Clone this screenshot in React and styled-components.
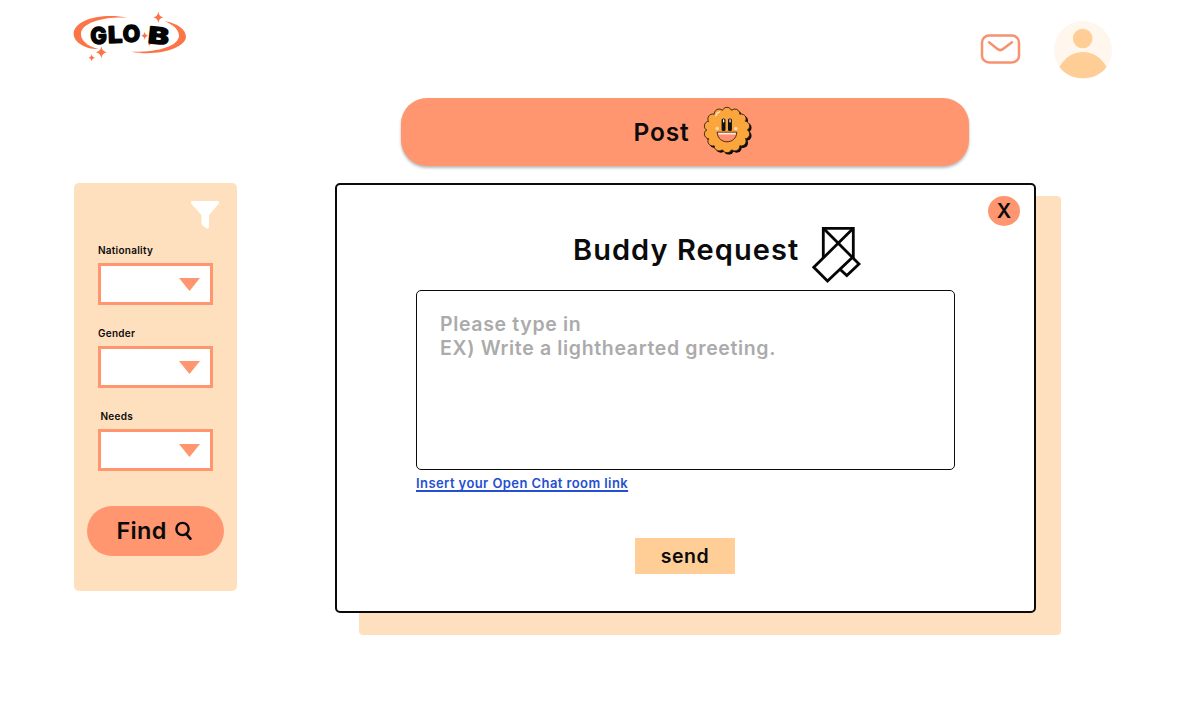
import React from 'react';
import styled, { createGlobalStyle } from 'styled-components';

//Styles

const GlobalStyle = createGlobalStyle`
  * {
    box-sizing: border-box;
  }

  body {
    margin: 0;
    background: #ffffff;
    font-family: Inter, 'Liberation Sans', sans-serif;
    color: #0b0b0b;
  }

  button {
    font-family: inherit;
    color: inherit;
    border: none;
    padding: 0;
    cursor: pointer;
  }
`;

const coral = '#ff966f';
const peach = '#ffe0be';
const apricot = '#ffce97';

//Components

const Page = styled('div')`
  width: 1200px;
  height: 701px;
  overflow: hidden;
`;

const Header = styled('header')`
  display: flex;
  align-items: flex-start;
  height: 98px;
  padding: 0 88px 0 60px;
`;

const Actions = styled('div')`
  display: flex;
  align-items: flex-start;
  gap: 33px;
  margin-left: auto;
  padding-top: 21px;

  svg:first-child {
    margin-top: 12px;
  }
`;

const Content = styled('div')`
  display: flex;
  align-items: flex-start;
  gap: 98px;
  padding-left: 74px;
`;

const Sidebar = styled('aside')`
  display: flex;
  flex-direction: column;
  width: 163px;
  height: 408px;
  margin-top: 85px;
  padding: 17px 13px 0;
  border-radius: 5px;
  background: ${peach};
`;

const FilterIcon = styled('svg')`
  align-self: flex-end;
  margin-right: 4px;
`;

const Field = styled('div')`
  height: 83px;
  padding: 0 11px;
`;

const Label = styled('div')`
  height: 19px;
  padding-left: ${({ $indent }) => $indent || 0}px;
  font-size: 10px;
  font-weight: 600;
  line-height: 12px;
  letter-spacing: 0.25px;
`;

const Select = styled('div')`
  display: flex;
  align-items: center;
  justify-content: flex-end;
  width: 115px;
  height: 42px;
  padding-right: 10px;
  border: 3px solid ${coral};
  background: #ffffff;
`;

const FindBtn = styled('button')`
  display: flex;
  align-items: center;
  justify-content: center;
  gap: 8px;
  height: 50px;
  margin-top: 13px;
  padding: 0 2px 2px 0;
  border-radius: 25px;
  background: ${coral};
  font-size: 23.5px;
  font-weight: 600;
  letter-spacing: 0.3px;
`;

const Main = styled('main')`
  display: flex;
  flex-direction: column;
  align-items: center;
  width: 701px;
`;

const PostBtn = styled('button')`
  display: flex;
  align-items: center;
  justify-content: center;
  gap: 14px;
  width: 568px;
  height: 68px;
  margin-right: 1px;
  padding: 0 0 1px 17px;
  border-radius: 26px;
  background: ${coral};
  box-shadow: 0 2px 3px rgba(0, 0, 0, 0.28);
  font-size: 24.5px;
  font-weight: 600;
  letter-spacing: 0.8px;

  svg {
    margin-bottom: 2px;
  }
`;

const Modal = styled('section')`
  position: relative;
  z-index: 0;
  display: flex;
  flex-direction: column;
  align-items: center;
  width: 701px;
  height: 430px;
  margin-top: 17px;

  &::before {
    content: '';
    position: absolute;
    z-index: -1;
    top: 13px;
    left: 24px;
    width: 702px;
    height: 439px;
    border-radius: 4px;
    background: ${peach};
  }
`;

const ModalBody = styled('div')`
  display: flex;
  flex-direction: column;
  width: 701px;
  height: 430px;
  padding: 11px 14px 0 79px;
  border: 2px solid #0b0b0b;
  border-radius: 5px;
  background: #ffffff;
`;

const CloseBtn = styled('button')`
  align-self: flex-end;
  width: 32px;
  height: 30px;
  border-radius: 50%;
  background: ${coral};
  font-size: 20px;
  font-weight: 600;
  line-height: 31px;
`;

const Heading = styled('div')`
  display: flex;
  align-items: center;
  gap: 13px;
  width: 540px;
  height: 58px;
  padding-left: 157px;
`;

const Title = styled('h1')`
  margin: 0 0 11px;
  font-size: 29px;
  font-weight: 600;
  letter-spacing: 1.05px;
  white-space: nowrap;
`;

const Message = styled('textarea')`
  display: block;
  width: 539px;
  height: 180px;
  margin-top: 6px;
  padding: 21px 23px;
  border: 1.5px solid #0b0b0b;
  border-radius: 5px;
  background: #ffffff;
  font-family: inherit;
  font-size: 19.5px;
  font-weight: 600;
  line-height: 24px;
  letter-spacing: 0.65px;
  resize: none;

  &::placeholder {
    color: #ababab;
    opacity: 1;
  }
`;

const ChatLink = styled('a')`
  align-self: flex-start;
  margin-top: 5px;
  color: #2450d0;
  font-size: 13px;
  font-weight: 600;
  line-height: 16px;
  letter-spacing: 0.42px;
  text-decoration: underline;
  text-decoration-thickness: 1.5px;
  text-decoration-skip-ink: none;
  text-underline-offset: 2px;
`;

const SendBtn = styled('button')`
  width: 100px;
  height: 36px;
  margin: 47px 0 0 219px;
  background: ${apricot};
  font-size: 19.5px;
  font-weight: 600;
  letter-spacing: 0.6px;
`;

const Star = ({ x, y, r }) => (
  <path
    fill="#fb7549"
    transform={`translate(${x} ${y}) scale(${r})`}
    d="M0-1Q.13-.13 .9 0Q.13.13 0 1Q-.13.13-.9 0Q-.13-.13 0-1Z"
  />
);

const Logo = () => (
  <svg width="140" height="70" viewBox="0 0 420 210">
    <g fill="#fb7549">
      <path d="M205 53C120 37 41 61 41 101C41 127 76 148 116 147C79 138 61 119 63 99C67 68 130 49 205 53Z" />
      <path d="M314 63C352 70 378 88 378 111C376 145 291 170 214 155C291 157 356 139 357 107C357 89 340 75 314 63Z" />
    </g>
    <Star x={295} y={52} r={17} />
    <Star x={254} y={107} r={12} />
    <Star x={268} y={133} r={5} />
    <Star x={124} y={157} r={18} />
    <Star x={95} y={173} r={11} />
    <g
      fill="#050505"
      stroke="#050505"
      strokeWidth="4.5"
      strokeLinejoin="round"
      fontFamily="Inter, sans-serif"
      fontWeight="800"
      fontSize="68"
    >
      <text x="91" y="131" textLength="49" lengthAdjust="spacingAndGlyphs" transform="rotate(-4 117 106)">
        G
      </text>
      <text x="144" y="128" textLength="43" lengthAdjust="spacingAndGlyphs" transform="rotate(-2 165 103)">
        L
      </text>
      <text x="188" y="126" textLength="52" lengthAdjust="spacingAndGlyphs">
        O
      </text>
      <text x="265" y="132" textLength="62" lengthAdjust="spacingAndGlyphs" transform="rotate(6 298 108)">
        B
      </text>
    </g>
  </svg>
);

const Mail = () => (
  <svg width="41" height="31" viewBox="0 0 41 31" fill="none" stroke="#f8916e" strokeWidth="2.5">
    <rect x="2" y="2.5" width="37" height="27" rx="7" />
    <path d="M9 9.2L17.5 16Q20.3 18.2 23 16L32 9.2" strokeLinecap="round" />
  </svg>
);

const Avatar = () => (
  <svg width="58" height="58" viewBox="0 0 58 58">
    <circle cx="29" cy="29" r="29" fill="#fff7ee" />
    <circle cx="28.7" cy="17.5" r="9.8" fill={apricot} />
    <path d="M5.5 46C16 26 42 26 52.5 46C42 61 16 61 5.5 46Z" fill={apricot} />
  </svg>
);

const bumps = Array.from({ length: 14 }, (_, i) => {
  const angle = (i * Math.PI * 2) / 14 - Math.PI / 2;
  return { cx: 24 + Math.cos(angle) * 18.2, cy: 24 + Math.sin(angle) * 17.8 };
});

const Cookie = () => (
  <svg width="50" height="50" viewBox="0 0 50 50">
    <g transform="translate(1.8 1.8)" fill="#0b0b0b">
      <circle cx="24" cy="24" r="20" />
      {bumps.map(({ cx, cy }) => (
        <circle key={cx + cy} cx={cx} cy={cy} r="5" />
      ))}
    </g>
    <g fill="#fba63c" stroke="#35200f" strokeWidth="0.9">
      {bumps.map(({ cx, cy }) => (
        <circle key={cx + cy} cx={cx} cy={cy} r="4.9" />
      ))}
    </g>
    <circle cx="24" cy="24" r="20" fill="#fba63c" />
    <path d="M12.8 9.5Q13.6 6.8 16.5 5.8" stroke="#ffe8cf" strokeWidth="1.4" fill="none" strokeLinecap="round" />
    <g fill="#111111">
      <rect x="18.6" y="12.5" width="3.9" height="12.5" rx="1.6" />
      <rect x="25" y="12.5" width="3.9" height="12.5" rx="1.6" />
    </g>
    <g fill="#ffffff">
      <rect x="20" y="13.2" width="1.3" height="3.2" rx=".6" />
      <rect x="26.4" y="13.2" width="1.3" height="3.2" rx=".6" />
    </g>
    <circle cx="14.2" cy="22.6" r="1.8" fill="#ffd7b0" />
    <circle cx="32.8" cy="22.6" r="1.8" fill="#ffd7b0" />
    <path d="M14.2 26.2H33.8C33.3 39 14.7 39 14.2 26.2Z" fill="#ff8f70" stroke="#35200f" strokeWidth="0.9" />
    <path d="M15 26.7H33L32.6 28.4H15.4Z" fill="#ffe9dc" />
  </svg>
);

const Envelope = () => (
  <svg width="50" height="58" viewBox="812 226 50 58" fill="none" stroke="#050505" strokeWidth="2.8">
    <path d="M823.3 258V228.3H853.3V258.5" />
    <path d="M853.3 228.3L813.8 267.3L827.5 281L851.8 258" />
    <path d="M823.3 228.3L859 264L846.8 275.6L840 269.3" />
  </svg>
);

const Arrow = () => (
  <svg width="21" height="13" viewBox="0 0 21 13">
    <path d="M0 0H21L10.5 13Z" fill={coral} />
  </svg>
);

const Search = () => (
  <svg width="18" height="20" viewBox="0 0 18 20" fill="none" stroke="#0b0b0b" strokeWidth="2.4">
    <circle cx="7.5" cy="9" r="6.1" />
    <path d="M11.3 13.8L15.4 18.7" strokeWidth="2.6" strokeLinecap="round" />
  </svg>
);

const filters = [{ title: 'Nationality' }, { title: 'Gender' }, { title: 'Needs', indent: 2.5 }];

const App = () => {
  return (
    <Page>
      <GlobalStyle />
      <Header>
        <Logo />
        <Actions>
          <Mail />
          <Avatar />
        </Actions>
      </Header>
      <Content>
        <Sidebar>
          <FilterIcon width="30" height="44" viewBox="0 0 30 44">
            <path
              d="M2 1H28Q30 2 28.5 4L19 15V27Q18.5 29.5 16.5 28.3L12.5 25.5Q11.5 24.5 11.5 23.5V15L1.5 4Q0 2 2 1Z"
              fill="#ffffff"
            />
          </FilterIcon>
          {filters.map(({ title, indent }) => (
            <Field key={title}>
              <Label $indent={indent}>{title}</Label>
              <Select>
                <Arrow />
              </Select>
            </Field>
          ))}
          <FindBtn>
            Find
            <Search />
          </FindBtn>
        </Sidebar>
        <Main>
          <PostBtn>
            Post
            <Cookie />
          </PostBtn>
          <Modal>
            <ModalBody>
              <CloseBtn>X</CloseBtn>
              <Heading>
                <Title>Buddy Request</Title>
                <Envelope />
              </Heading>
              <Message placeholder={'Please type in\nEX) Write a lighthearted greeting.'} />
              <ChatLink>Insert your Open Chat room link</ChatLink>
              <SendBtn>send</SendBtn>
            </ModalBody>
          </Modal>
        </Main>
      </Content>
    </Page>
  );
};

export default App;
